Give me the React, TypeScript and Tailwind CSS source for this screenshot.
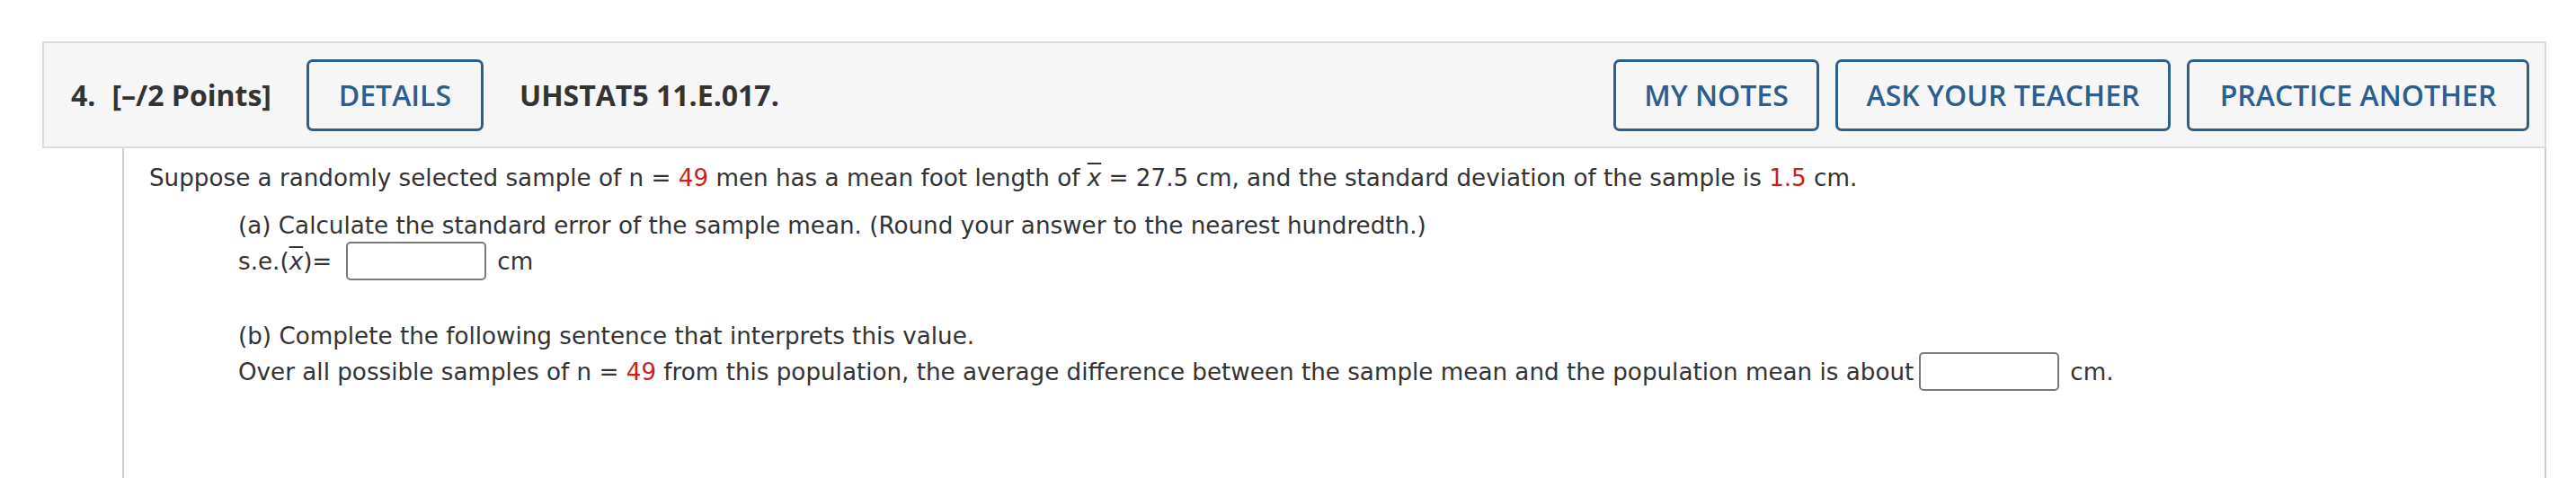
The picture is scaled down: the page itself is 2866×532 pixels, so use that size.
import React from 'react'

const body = "font-['DejaVu_Sans','Verdana',sans-serif]"
const head = "font-['Open_Sans',sans-serif]"

function Btn({ w, children }: { w: string; children: React.ReactNode }) {
  return (
    <button
      type="button"
      className={`${head} ${w} h-[80px] rounded-[7px] border-[3px] border-[#2c5e8f] bg-[#f6f6f6] text-center text-[32px] font-semibold text-[#2c5e8f] uppercase`}
    >
      {children}
    </button>
  )
}

function Blank() {
  return (
    <span className="inline-block h-[43px] w-[156px] rounded-[5px] border-2 border-[#7a7a7a] bg-white" />
  )
}

function Red({ children }: { children: React.ReactNode }) {
  return <span className="text-[#cc1f1f]">{children}</span>
}

function XBar() {
  return <span className="italic overline decoration-2">x</span>
}

export default function App() {
  return (
    <div className="flex h-[532px] w-full flex-col bg-white pt-[46px] pr-[33px] pl-[47px]">
      <div className="flex h-[119px] items-center border-2 border-[#dcdcdc] bg-[#f6f6f6] pr-[17px] pl-[30px]">
        <div className={`${head} flex items-center text-[32px] font-bold text-[#333]`}>
          <span>4.</span>
          <span className="ml-[18px]">[–/2 Points]</span>
        </div>
        <div className="ml-[39px]">
          <Btn w="w-[197px]">Details</Btn>
        </div>
        <div className={`${head} ml-[40px] text-[32px] font-bold text-[#333]`}>
          UHSTAT5 11.E.017.
        </div>
        <div className="ml-auto flex gap-[18px]">
          <Btn w="w-[229px]">My Notes</Btn>
          <Btn w="w-[373px]">Ask Your Teacher</Btn>
          <Btn w="w-[381px]">Practice Another</Btn>
        </div>
      </div>
      <div
        className={`${body} ml-[89px] flex flex-1 flex-col border-x-2 border-[#cccccc] pt-[13px] pl-[28px] text-[26.2px] leading-[40px] text-[#333]`}
      >
        <div>
          Suppose a randomly selected sample of n = <Red>49</Red> men has a mean foot
          length of <XBar /> = 27.5 cm, and the standard deviation of the sample is{' '}
          <Red>1.5</Red> cm.
        </div>
        <div className="mt-[13px] pl-[99px]">
          <div>
            (a) Calculate the standard error of the sample mean. (Round your answer to the
            nearest hundredth.)
          </div>
          <div className="-mt-[2px] flex items-center">
            <span>
              s.e.(<XBar />)=
            </span>
            <span className="ml-[16px] flex">
              <Blank />
            </span>
            <span className="ml-[12px]">cm</span>
          </div>
          <div className="mt-[42px]">
            (b) Complete the following sentence that interprets this value.
          </div>
          <div className="-mt-[2px] flex items-center">
            <span className="whitespace-pre">
              Over all possible samples of n = <Red>49</Red> from this population, the
              average difference between the sample mean and the population mean is about
            </span>
            <span className="ml-[6px] flex">
              <Blank />
            </span>
            <span className="ml-[12px]">cm.</span>
          </div>
        </div>
      </div>
    </div>
  )
}
